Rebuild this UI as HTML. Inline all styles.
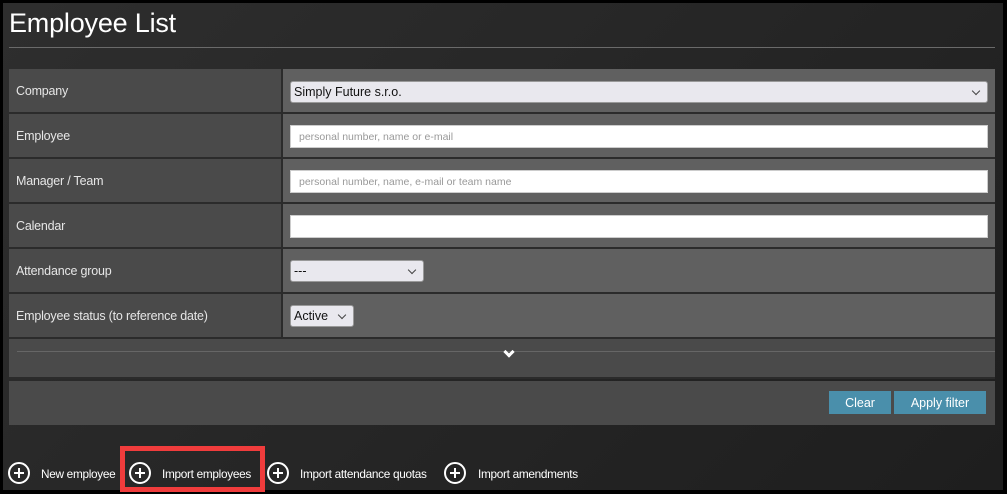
<!DOCTYPE html>
<html><head><style>
*{margin:0;padding:0;box-sizing:border-box}
body{width:1007px;height:494px;background:#000;font-family:"Liberation Sans",sans-serif;overflow:hidden;position:relative}
.page{position:absolute;left:3px;top:3px;width:1000px;height:487px;background:linear-gradient(135deg,#2e2e2e 0%,#262626 50%,#1e1e1e 100%)}
.title{position:absolute;left:6px;top:5px;color:#fff;font-size:27px;font-weight:normal;letter-spacing:-0.2px}
.hr{position:absolute;left:6px;top:44px;width:986px;height:1px;background:#6a6a6a}
.tbl{position:absolute;left:6px;top:66px;width:986px}
.row{height:45px;display:flex;border-bottom:2px solid #2b2b2b}
.lab{width:274px;background:#4a4a4a;color:#e6e6e6;font-size:12.5px;padding:15px 7px;border-right:2px solid #2b2b2b;letter-spacing:-0.2px}
.val{flex:1;background:#606060;position:relative}
.inp{position:absolute;left:7px;top:11px;right:7px;height:23px;background:#fff;border:1px solid #ccc;font-size:10.5px;color:#999;padding:5px 8px}
.sel{position:absolute;left:7px;top:10px;height:22px;background:#e9e8ee;border:1px solid #999;border-radius:3px;font-size:12.5px;color:#111;padding:3px 3px}
.sel:after{content:"";position:absolute;right:8px;top:6px;width:5px;height:5px;border-right:1.5px solid #444;border-bottom:1.5px solid #444;transform:rotate(45deg)}
.band{position:absolute;left:6px;top:336px;width:986px;height:40px;background:#4a4a4a;border-bottom:2px solid #2b2b2b}
.band .l{position:absolute;left:8px;right:0;top:12px;height:1px;background:#666}
.chev{position:absolute;left:496px;top:9px;width:8px;height:8px;border-right:3px solid #fff;border-bottom:3px solid #fff;transform:rotate(45deg)}
.foot{position:absolute;left:6px;top:378px;width:986px;height:44px;background:#4a4a4a}
.btn{position:absolute;top:10px;height:23px;background:#4a8fab;color:#fff;font-size:12.5px;text-align:center;line-height:24px}
.ic{position:absolute;top:459px;width:22px;height:22px;border:2px solid #fff;border-radius:50%}
.ic:before{content:"";position:absolute;left:4px;top:8px;width:10px;height:2px;background:#fff}
.ic:after{content:"";position:absolute;left:8px;top:4px;width:2px;height:10px;background:#fff}
.t{position:absolute;top:464px;color:#fff;font-size:11.8px;letter-spacing:-0.3px}
.red{position:absolute;left:117px;top:443px;width:145px;height:46px;border:5px solid #f03c3c}
</style></head><body>
<div class="page">
<div class="title">Employee List</div>
<div class="hr"></div>
<div class="tbl">
<div class="row"><div class="lab">Company</div><div class="val"><div class="sel" style="right:7px;left:7px;top:12px">Simply Future s.r.o.</div></div></div>
<div class="row"><div class="lab">Employee</div><div class="val"><div class="inp">personal number, name or e-mail</div></div></div>
<div class="row"><div class="lab">Manager / Team</div><div class="val"><div class="inp">personal number, name, e-mail or team name</div></div></div>
<div class="row"><div class="lab">Calendar</div><div class="val"><div class="inp"></div></div></div>
<div class="row"><div class="lab">Attendance group</div><div class="val"><div class="sel" style="width:134px;top:11px">---</div></div></div>
<div class="row"><div class="lab">Employee status (to reference date)</div><div class="val"><div class="sel" style="width:64px;top:11px">Active</div></div></div>
</div>
<div class="band"><div class="l"></div><div class="chev"></div></div>
<div class="foot">
<div class="btn" style="left:820px;width:62px">Clear</div>
<div class="btn" style="left:885px;width:92px">Apply filter</div>
</div>
<div class="ic" style="left:5px"></div><span class="t" style="left:38px">New employee</span>
<div class="ic" style="left:126px"></div><span class="t" style="left:159px">Import employees</span>
<div class="ic" style="left:264px"></div><span class="t" style="left:297px">Import attendance quotas</span>
<div class="ic" style="left:441px"></div><span class="t" style="left:475px">Import amendments</span>
<div class="red"></div>
</div>
</body></html>
